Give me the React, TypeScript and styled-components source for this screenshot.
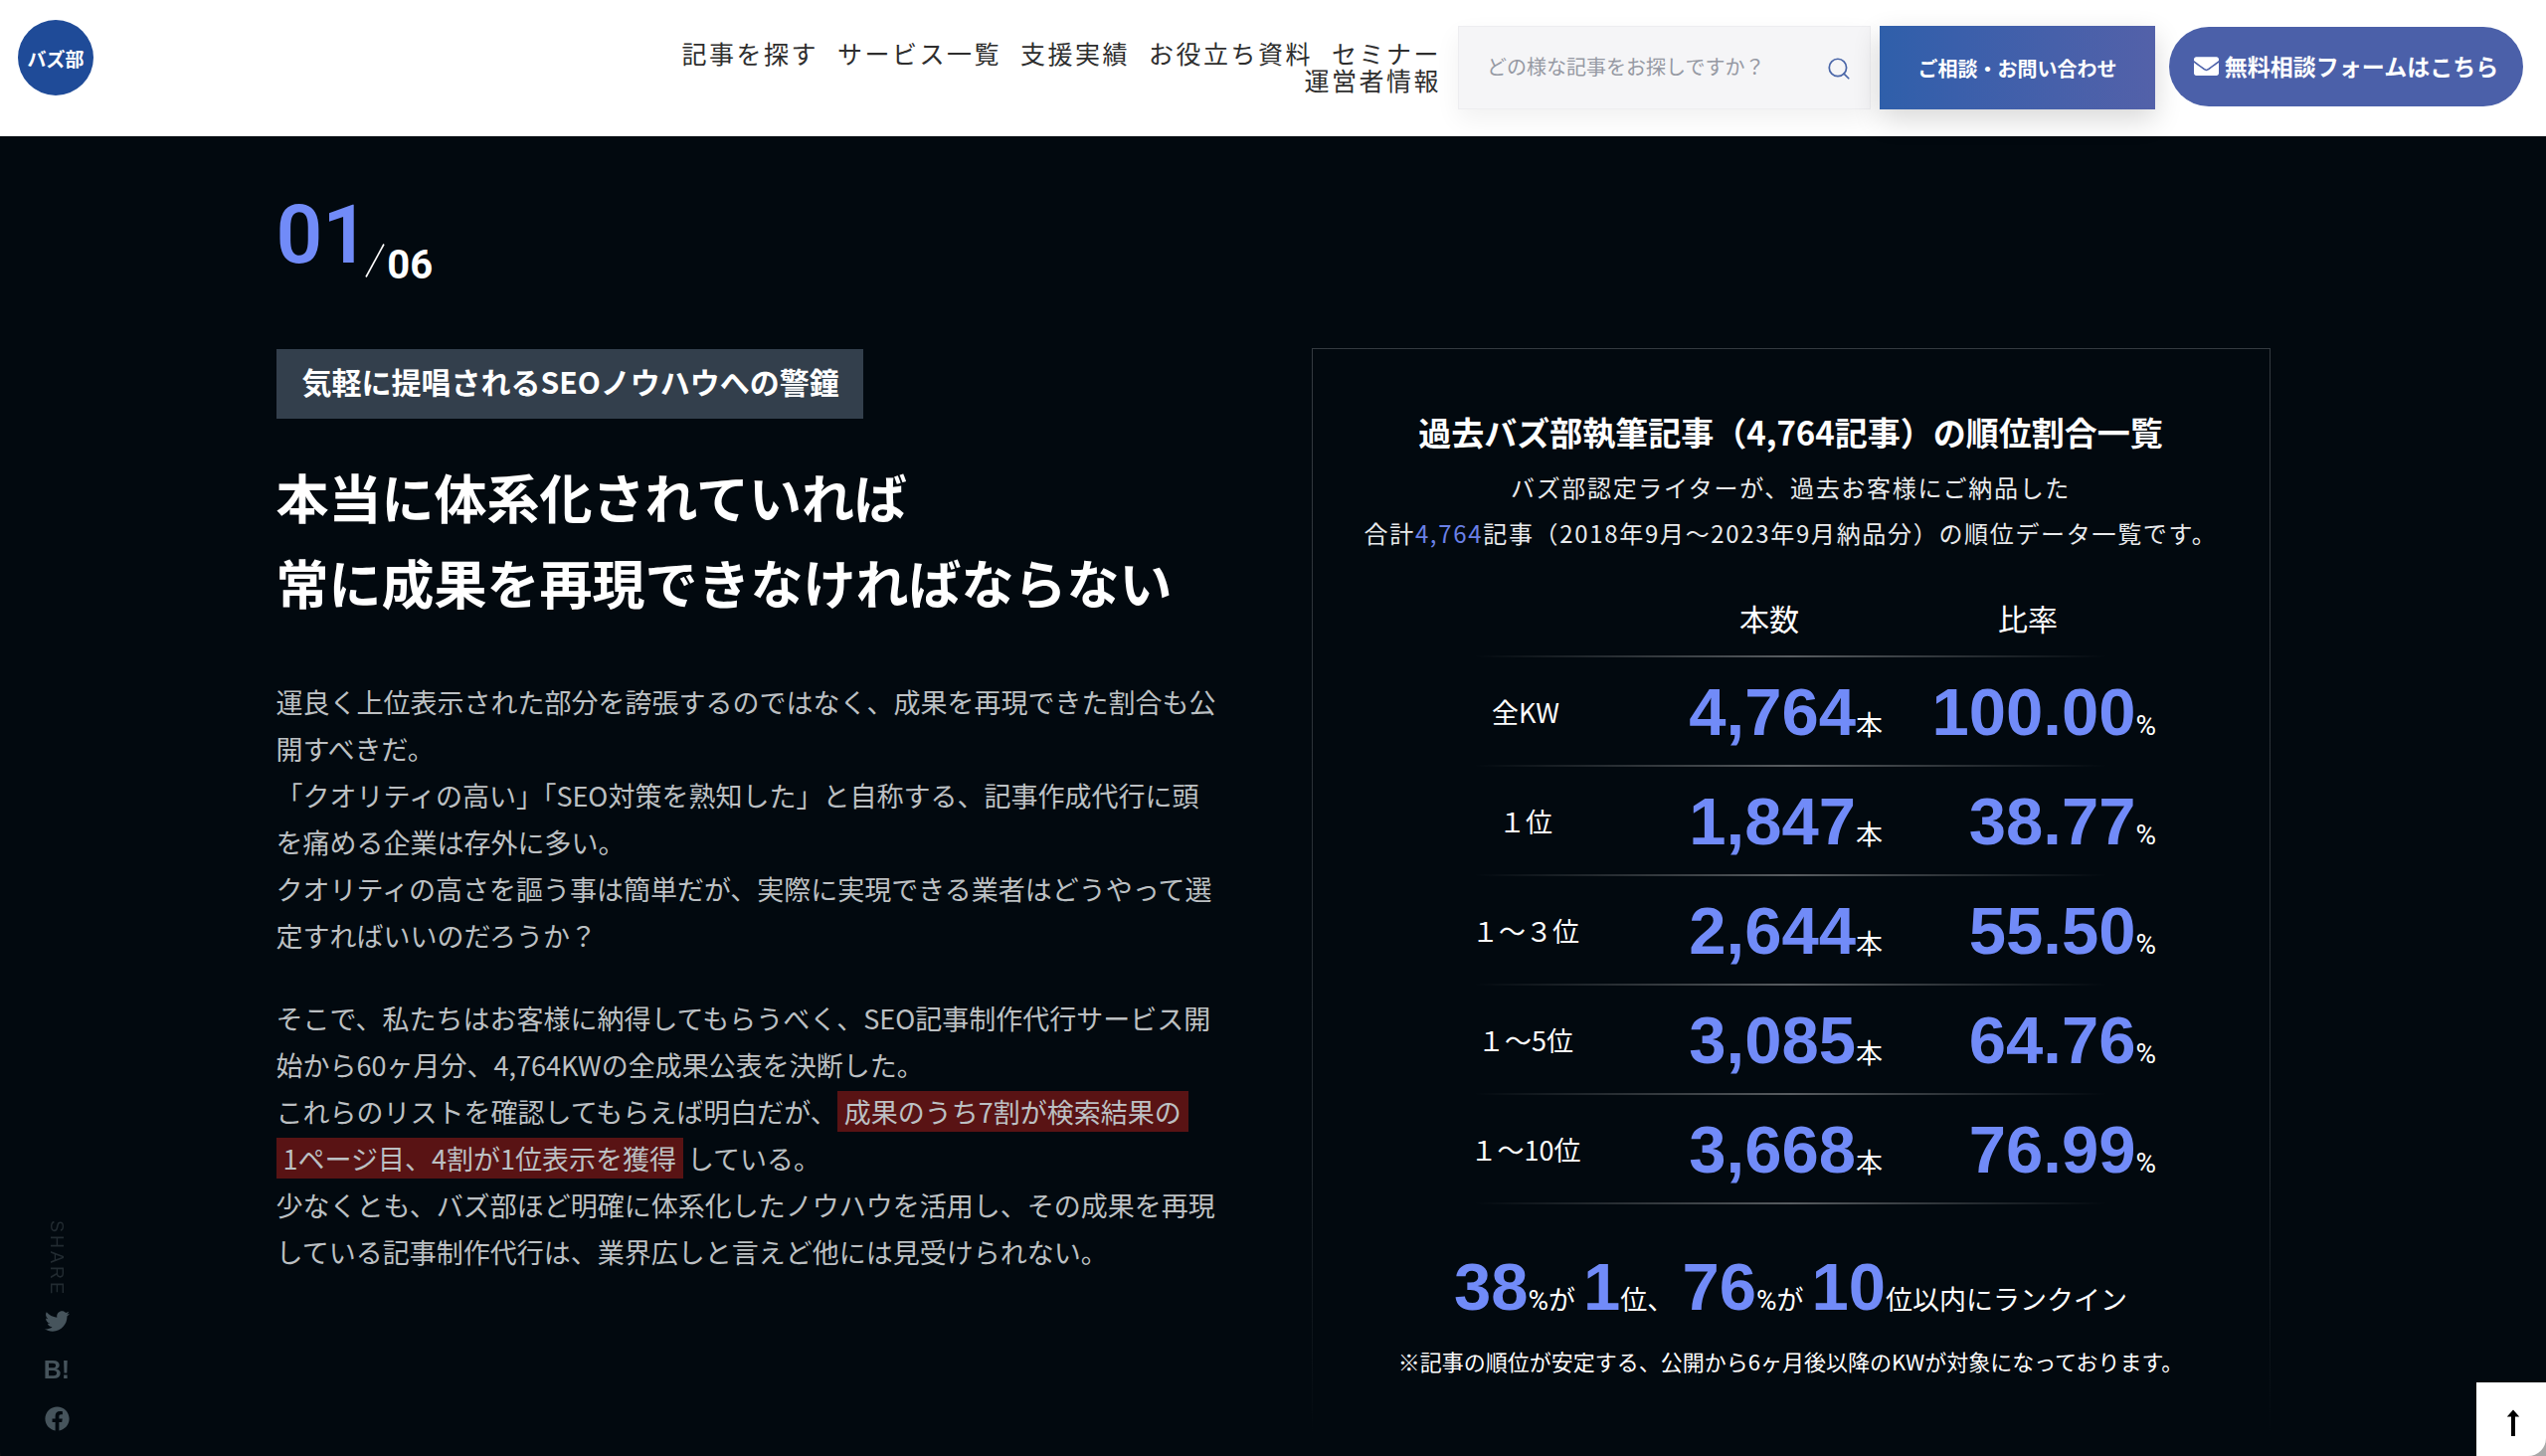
import React from "react";
import styled, { createGlobalStyle } from "styled-components";
import { FaEnvelope, FaFacebook, FaTwitter } from "react-icons/fa";
import { FiSearch } from "react-icons/fi";

const GlobalStyle = createGlobalStyle`
  *, *::before, *::after { box-sizing: border-box; }
  html { background: #000; }
  body {
    margin: 0;
    font-family: "Noto Sans CJK JP", "Noto Sans", sans-serif;
    color: #fff;
    -webkit-font-smoothing: antialiased;
  }
  h1, h2, h3, p { margin: 0; }
  a { color: inherit; text-decoration: none; }
`;

const accent = "#718bf8";

const Page = styled.div`
  display: flex;
  flex-direction: column;
  min-height: 100vh;
  background: #02090f;
  border-radius: 0 0 18px 18px;
  border-bottom: 1px solid #20262b;
  overflow: hidden;
`;

const Header = styled.header`
  display: flex;
  align-items: flex-start;
  height: 137px;
  padding: 0 23px 0 18px;
  background: #fff;
`;

const Logo = styled.a`
  display: flex;
  align-items: center;
  justify-content: center;
  width: 76px;
  height: 76px;
  margin-top: 20px;
  border-radius: 50%;
  background: #1f4b98;
  color: #fff;
  font-size: 19px;
  font-weight: 700;
`;

const Nav = styled.nav`
  display: flex;
  flex-wrap: wrap;
  justify-content: flex-end;
  column-gap: 19px;
  max-width: 800px;
  margin: 40px 17px 0 auto;
`;

const NavLink = styled.a`
  color: #2e2e2e;
  font-size: 25px;
  line-height: 27px;
  letter-spacing: 0.1em;
  white-space: nowrap;
`;

const SearchForm = styled.form`
  display: flex;
  align-items: center;
  width: 415px;
  height: 84px;
  margin: 26px 9px 0 0;
  padding: 0 18px 0 28px;
  border: 1px solid #ededf0;
  background: #f5f5f7;
  box-shadow: 0 10px 24px rgba(0, 0, 0, 0.06);
`;

const SearchInput = styled.input`
  flex: 1;
  min-width: 0;
  padding: 0 0 4px;
  border: 0;
  outline: 0;
  background: transparent;
  font-family: inherit;
  font-size: 20px;
  color: #333;
  &::placeholder { color: #9599a3; opacity: 1; }
`;

const SearchButton = styled.button`
  display: flex;
  padding: 2px 0 0;
  border: 0;
  background: none;
  color: #4a66a8;
  font-size: 26px;
`;

const ContactButton = styled.button`
  width: 277px;
  height: 84px;
  margin: 26px 14px 0 0;
  padding: 0;
  border: 0;
  background: linear-gradient(90deg, #2f5faa 0%, #3a5fab 28%, #5361a9 100%);
  box-shadow: 0 10px 28px rgba(0, 0, 0, 0.16);
  color: #fff;
  font-family: inherit;
  font-size: 20px;
  font-weight: 700;
`;

const FormButton = styled.button`
  display: flex;
  align-items: center;
  justify-content: center;
  gap: 6px;
  width: 356px;
  height: 80px;
  margin-top: 27px;
  padding: 0 0 2px;
  border: 0;
  border-radius: 40px;
  background: #4b60a9;
  color: #fff;
  font-family: inherit;
  font-size: 23px;
  font-weight: 700;
  white-space: nowrap;
  svg { font-size: 25px; }
`;

const Section = styled.section`
  flex: 1;
  width: 100%;
  max-width: 2005px;
  margin: 0 auto;
  padding: 57px 0 36px;
`;

const Counter = styled.div`
  display: flex;
  align-items: flex-end;
  height: 93px;
  margin-bottom: 63px;
  font-family: Roboto, sans-serif;
`;

const Current = styled.span`
  align-self: flex-start;
  color: ${accent};
  font-size: 82px;
  line-height: 84px;
  font-weight: 600;
`;

const Total = styled.span`
  font-size: 40px;
  line-height: 40px;
  font-weight: 700;
`;

const Slash = styled.svg`
  width: 20px;
  height: 34px;
  margin: 0 2px 8px -4px;
`;

const Columns = styled.div`
  display: grid;
  grid-template-columns: minmax(0, 1fr) 964px;
  column-gap: 90px;
  align-items: start;
`;

const Tag = styled.p`
  width: fit-content;
  margin-top: 1px;
  padding: 8px 24px 14px 26px;
  background: #333f4c;
  font-size: 30px;
  line-height: 48px;
  font-weight: 700;
`;

const Headline = styled.h1`
  margin-top: 35px;
  font-size: 53px;
  line-height: 86px;
  font-weight: 700;
  white-space: nowrap;
`;

const Copy = styled.div`
  display: grid;
  row-gap: 36px;
  margin-top: 54px;
  color: #bcc0c3;
  font-size: 27px;
  line-height: 47px;
`;

const Mark = styled.em`
  padding: 1px 7px;
  margin-right: 4px;
  background: #591314;
  font-style: normal;
  -webkit-box-decoration-break: clone;
  box-decoration-break: clone;
`;

const Panel = styled.section`
  padding: 58px 0 56px;
  border: 1px solid transparent;
  border-bottom: 0;
  border-image: linear-gradient(180deg, #343a40 0%, #22292f 75%, rgba(29, 36, 42, 0) 100%) 1;
  text-align: center;
`;

const PanelTitle = styled.h2`
  font-size: 33px;
  line-height: 50px;
  font-weight: 700;
`;

const PanelLead = styled.p`
  margin-top: 8px;
  font-size: 24px;
  line-height: 46px;
  letter-spacing: 0.07em;
  color: #e8eaec;
`;

const LeadNumber = styled.span`
  color: #6a80e6;
`;

const Table = styled.table`
  width: 795px;
  margin: 26px auto 0;
  border-collapse: collapse;
  table-layout: fixed;
  font-size: 27px;
  line-height: 40px;
`;

const Row = styled.tr`
  height: 110px;
  background: linear-gradient(90deg, transparent 10%, rgba(255, 255, 255, 0.34) 50%, transparent 90%) bottom / 100% 2px no-repeat;
`;

const HeadRow = styled(Row)`
  height: 76px;
`;

const HeadCell = styled.th<{ $last?: boolean }>`
  padding: ${(p) => (p.$last ? "0 30px 4px 17px" : "0 0 4px")};
  font-size: 30px;
  font-weight: 400;
`;

const LabelCell = styled.th`
  padding: 0;
  font-weight: 400;
`;

const ValueCell = styled.td<{ $last?: boolean }>`
  padding: ${(p) => (p.$last ? "0 30px 0 0" : "0")};
  text-align: right;
  white-space: nowrap;
`;

const Big = styled.strong`
  color: ${accent};
  font-family: "Liberation Sans", Arial, sans-serif;
  font-size: 67px;
  line-height: 80px;
  font-weight: 700;
`;

const SummaryFigure = styled(Big)`
  margin-left: 2px;
`;

const Percent = styled.span`
  font-family: Roboto, sans-serif;
  font-size: 28px;
`;

const Summary = styled.p`
  margin-top: 43px;
  font-size: 27px;
  line-height: 40px;
`;

const Note = styled.p`
  margin-top: 18px;
  font-size: 22px;
  line-height: 32px;
`;

const ShareRail = styled.aside`
  position: fixed;
  left: 44px;
  bottom: 26px;
  display: flex;
  flex-direction: column;
  align-items: center;
  width: 26px;
  color: #46545c;
`;

const ShareLabel = styled.span`
  margin-bottom: 12px;
  color: #222b31;
  font-family: "Liberation Sans", Arial, sans-serif;
  font-size: 18px;
  line-height: 26px;
  letter-spacing: 3px;
  writing-mode: vertical-rl;
`;

const ShareLink = styled.a`
  display: flex;
  align-items: center;
  justify-content: center;
  height: 24px;
  font-family: "Liberation Sans", Arial, sans-serif;
  font-size: 25px;
  font-weight: 700;
  & + & { margin-top: 25px; }
`;

const TopCorner = styled.div`
  position: fixed;
  right: 0;
  bottom: 0;
  background: #a9a9a9;
`;

const TopButton = styled.button`
  display: flex;
  align-items: center;
  justify-content: center;
  width: 70px;
  height: 74px;
  padding: 8px 0 0 4px;
  border: 0;
  border-radius: 0 0 18px 0;
  background: #fff;
`;

const navItems = [
  "記事を探す",
  "サービス一覧",
  "支援実績",
  "お役立ち資料",
  "セミナー",
  "運営者情報",
];

const rows = [
  { label: "全KW", count: "4,764", ratio: "100.00" },
  { label: "１位", count: "1,847", ratio: "38.77" },
  { label: "１～３位", count: "2,644", ratio: "55.50" },
  { label: "１～5位", count: "3,085", ratio: "64.76" },
  { label: "１～10位", count: "3,668", ratio: "76.99" },
];

export default function App() {
  return (
    <>
      <GlobalStyle />
      <Page>
        <Header>
          <Logo href="#">バズ部</Logo>
          <Nav>
            {navItems.map((item) => (
              <NavLink key={item} href="#">{item}</NavLink>
            ))}
          </Nav>
          <SearchForm onSubmit={(e) => e.preventDefault()}>
            <SearchInput type="text" aria-label="記事を検索" placeholder="どの様な記事をお探しですか？" />
            <SearchButton type="submit" aria-label="検索">
              <FiSearch strokeWidth={1.6} />
            </SearchButton>
          </SearchForm>
          <ContactButton type="button">ご相談・お問い合わせ</ContactButton>
          <FormButton type="button">
            <FaEnvelope />
            無料相談フォームはこちら
          </FormButton>
        </Header>

        <Section>
          <Counter>
            <Current>01</Current>
            <Slash viewBox="0 0 20 34" aria-hidden="true">
              <path d="M1 33.5 19 0.5" stroke="#fff" strokeWidth="1.6" fill="none" />
            </Slash>
            <Total>06</Total>
          </Counter>

          <Columns>
            <div>
              <Tag>気軽に提唱されるSEOノウハウへの警鐘</Tag>
              <Headline>
                本当に体系化されていれば
                <br />
                常に成果を再現できなければならない
              </Headline>
              <Copy>
                <p>
                  運良く上位表示された部分を誇張するのではなく、成果を再現できた割合も公開すべきだ。
                  <br />
                  「クオリティの高い」「SEO対策を熟知した」と自称する、記事作成代行に頭を痛める企業は存外に多い。
                  <br />
                  クオリティの高さを謳う事は簡単だが、実際に実現できる業者はどうやって選定すればいいのだろうか？
                </p>
                <p>
                  そこで、私たちはお客様に納得してもらうべく、SEO記事制作代行サービス開始から60ヶ月分、4,764KWの全成果公表を決断した。
                  <br />
                  これらのリストを確認してもらえば明白だが、
                  <Mark>
                    成果のうち7割が検索結果の
                    <br />
                    1ページ目、4割が1位表示を獲得
                  </Mark>
                  している。
                  <br />
                  少なくとも、バズ部ほど明確に体系化したノウハウを活用し、その成果を再現している記事制作代行は、業界広しと言えど他には見受けられない。
                </p>
              </Copy>
            </div>

            <Panel>
              <PanelTitle>過去バズ部執筆記事（4,764記事）の順位割合一覧</PanelTitle>
              <PanelLead>
                バズ部認定ライターが、過去お客様にご納品した
                <br />
                合計<LeadNumber>4,764</LeadNumber>記事（2018年9月～2023年9月納品分）の順位データ一覧です。
              </PanelLead>
              <Table>
                <colgroup>
                  <col width="262" />
                  <col width="228" />
                  <col width="305" />
                </colgroup>
                <thead>
                  <HeadRow>
                    <HeadCell as="td" />
                    <HeadCell scope="col">本数</HeadCell>
                    <HeadCell scope="col" $last>比率</HeadCell>
                  </HeadRow>
                </thead>
                <tbody>
                  {rows.map((row) => (
                    <Row key={row.label}>
                      <LabelCell scope="row">{row.label}</LabelCell>
                      <ValueCell><Big>{row.count}</Big>本</ValueCell>
                      <ValueCell $last><Big>{row.ratio}</Big><Percent>%</Percent></ValueCell>
                    </Row>
                  ))}
                </tbody>
              </Table>
              <Summary>
                <Big>38</Big><Percent>%</Percent>が <SummaryFigure>1</SummaryFigure>位、 <SummaryFigure>76</SummaryFigure><Percent>%</Percent>が <SummaryFigure>10</SummaryFigure>位以内にランクイン
              </Summary>
              <Note>※記事の順位が安定する、公開から6ヶ月後以降のKWが対象になっております。</Note>
            </Panel>
          </Columns>
        </Section>
      </Page>

      <ShareRail>
        <ShareLabel>SHARE</ShareLabel>
        <ShareLink href="#" aria-label="Twitter"><FaTwitter /></ShareLink>
        <ShareLink href="#">B!</ShareLink>
        <ShareLink href="#" aria-label="Facebook"><FaFacebook /></ShareLink>
      </ShareRail>

      <TopCorner>
        <TopButton type="button" aria-label="ページの先頭へ">
          <svg width="14" height="28" viewBox="0 0 14 28" aria-hidden="true">
            <path d="M7 0.5 13.2 7.5H9V27H5V7.5H0.8Z" fill="#000" />
          </svg>
        </TopButton>
      </TopCorner>
    </>
  );
}
